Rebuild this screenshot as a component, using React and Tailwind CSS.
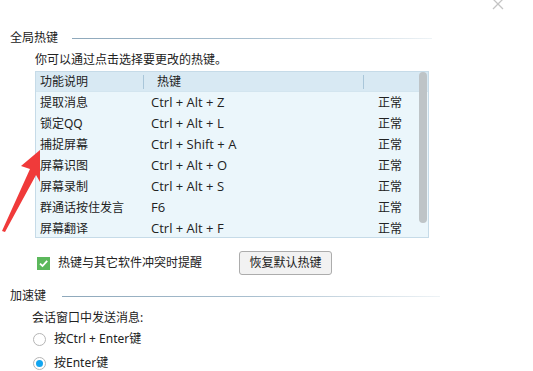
import React from 'react'

const rows = [
  ['提取消息', 'Ctrl + Alt + Z'],
  ['锁定QQ', 'Ctrl + Alt + L'],
  ['捕捉屏幕', 'Ctrl + Shift + A'],
  ['屏幕识图', 'Ctrl + Alt + O'],
  ['屏幕录制', 'Ctrl + Alt + S'],
  ['群通话按住发言', 'F6'],
  ['屏幕翻译', 'Ctrl + Alt + F'],
]

function SectionTitle({ title, gap, right }) {
  return (
    <div className="flex items-center h-[14px] pl-[10px]" style={{ paddingRight: right }}>
      <span className="text-[12px] leading-[14px] text-[#222]">{title}</span>
      <div
        className="flex-1 h-px bg-gradient-to-r from-[#8ea8bb] via-[#a9bfcf] to-[#eef3f6]"
        style={{ marginLeft: gap }}
      />
    </div>
  )
}

export default function App() {
  return (
    <div className="relative w-[533px] h-[371px] bg-white overflow-hidden text-[#222] font-['Segoe_UI','Noto_Sans','Noto_Sans_CJK_SC',sans-serif]">
      {/* close */}
      <svg className="absolute left-[492px] top-[-2px]" width="12" height="12" viewBox="0 0 12 12">
        <path d="M1 1 L11 11 M11 1 L1 11" stroke="#c4c4c4" strokeWidth="1.3" />
      </svg>

      <div className="pt-[31px]">
        <SectionTitle title="全局热键" gap="14px" right="101px" />
      </div>

      <div className="pl-[35px] mt-[8px] text-[12px] leading-[14px]">你可以通过点击选择要更改的热键。</div>

      <div className="ml-[35px] mt-[4px] w-[394px] h-[167px] border border-[#c6dbe8] bg-[#ebf6fb] overflow-hidden relative text-[12px]">
        <div className="flex h-[20px] items-center bg-[#d8e9f3] border-b border-[#d3e5ef]">
          <div className="w-[107px] pl-[4px]">功能说明</div>
          <div className="w-px h-[14px] bg-[#a9c6d9]" />
          <div className="w-[219px] pl-[13px]">热键</div>
          <div className="w-px h-[14px] bg-[#a9c6d9]" />
          <div className="flex-1" />
        </div>
        {rows.map(([name, key]) => (
          <div key={name} className="flex h-[21px] items-center">
            <div className="w-[115px] pl-[4px]">{name}</div>
            <div className="w-[227px] font-['Segoe_UI','Open_Sans',sans-serif] text-[13px]">{key}</div>
            <div>正常</div>
          </div>
        ))}
        <div className="absolute right-[1px] top-0 w-[8px] h-[151px] rounded-[4px] bg-[#bec4c7]" />
      </div>

      <div className="flex items-center h-[24px] mt-[13px] pl-[37px]">
        <div className="w-[13px] h-[13px] bg-[#5cb85c] flex items-center justify-center">
          <svg width="11" height="11" viewBox="0 0 11 11">
            <path d="M2 5.6 L4.5 8 L9.2 2.8" stroke="white" strokeWidth="1.8" fill="none" />
          </svg>
        </div>
        <span className="ml-[8px] text-[12px]">热键与其它软件冲突时提醒</span>
        <button className="ml-[37px] w-[93px] h-[24px] border border-[#acacac] rounded-[3px] bg-[#f2f2f2] text-[12px] text-[#222]">
          恢复默认热键
        </button>
      </div>

      <div className="mt-[14px]">
        <SectionTitle title="加速键" gap="16px" right="93px" />
      </div>

      <div className="pl-[32px] mt-[8px] text-[12px] leading-[14px]">会话窗口中发送消息:</div>

      <div className="flex items-center h-[22px] mt-[3px] pl-[33px]">
        <div className="w-[13px] h-[13px] rounded-full border border-[#b5b5b5] bg-white" />
        <span className="ml-[8px] text-[12px]">按Ctrl + Enter键</span>
      </div>
      <div className="flex items-center h-[22px] mt-[2px] pl-[33px]">
        <div className="w-[13px] h-[13px] rounded-full border border-[#b5b5b5] bg-white flex items-center justify-center">
          <div className="w-[7px] h-[7px] rounded-full bg-[#12a5f0]" />
        </div>
        <span className="ml-[8px] text-[12px]">按Enter键</span>
      </div>

      {/* red arrow annotation */}
      <svg className="absolute left-0 top-0" width="60" height="240" viewBox="0 0 60 240">
        <polygon points="40,150 21,166 30,169 2,231 5,232 36,175 40,182" fill="#f03a3a" />
      </svg>
    </div>
  )
}
